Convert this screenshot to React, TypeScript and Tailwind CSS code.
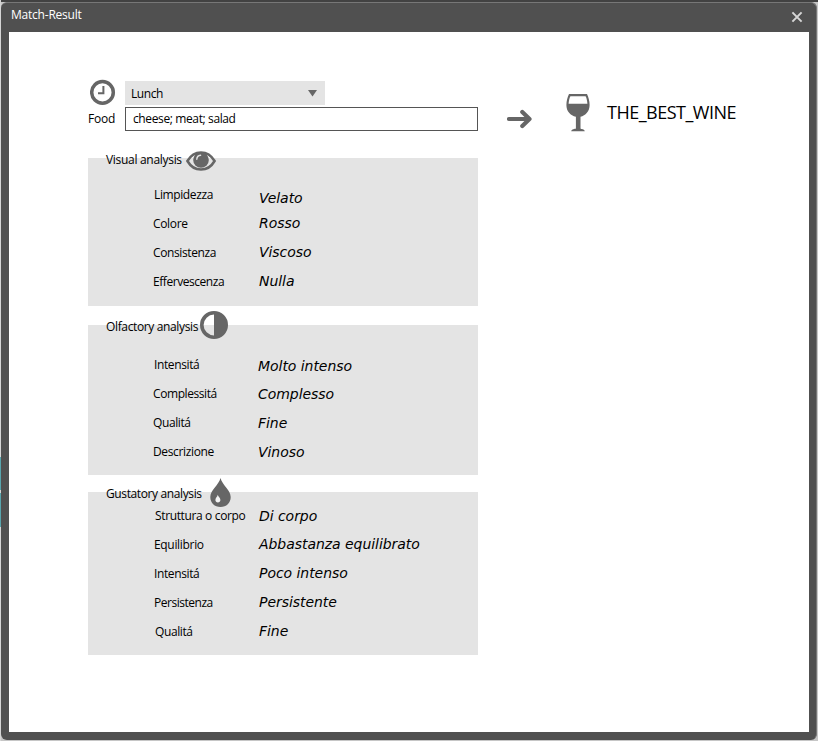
import React from "react";

type Item = { text: string; className: string };
type Analysis = {
  title: string;
  titleClass: string;
  icon: React.ReactNode;
  sectionClass: string;
  labels: Item[];
  values: Item[];
};

const label = "block h-4 w-fit whitespace-pre text-[12px] leading-[16px]";
const value =
  "block h-4 w-fit whitespace-pre font-['DejaVu_Sans',sans-serif] text-[14px] italic leading-[16px] tracking-[-0.05px]";

const EyeIcon = () => (
  <svg width="30" height="20" viewBox="0 0 30 20" className="ml-1 -mt-[7px]">
    <path d="M1.4 10C8-1.4 22-1.4 28.6 10C22 21.4 8 21.4 1.4 10Z" fill="none" stroke="#666" strokeWidth="2.5" />
    <circle cx="15" cy="9" r="7.8" fill="#666" />
    <path d="M10.8 8.2C10.9 5.9 12.4 4.4 14.6 4.2" fill="none" stroke="#e4e4e4" strokeWidth="1.4" strokeLinecap="round" />
  </svg>
);

const HalfCircleIcon = () => (
  <svg width="28" height="28" viewBox="0 0 28 28" className="-mt-[14px] ml-px">
    <circle cx="14" cy="14" r="12.2" fill="none" stroke="#666" strokeWidth="3.6" />
    <path d="M14 2A12 12 0 0 1 14 26Z" fill="#666" />
  </svg>
);

const DropIcon = () => (
  <svg width="21" height="30" viewBox="0 0 21 30" className="-mt-[14px] ml-[8px]">
    <path d="M10.5 0C12 6.8 20.7 12 20.7 19C20.7 25 16.4 29 10.5 29S.3 25 .3 19C.3 12 9 6.8 10.5 0Z" fill="#666" />
    <path d="M7.8 16.8C8.2 18.8 10.4 20 10.4 22.1C10.4 23.6 9.3 24.4 7.9 24.4S5.4 23.6 5.4 22.1C5.4 20 7.4 18.8 7.8 16.8Z" fill="#f3f3f3" />
  </svg>
);

const analyses: Analysis[] = [
  {
    title: "Visual analysis",
    titleClass: "w-[76px] tracking-[-0.3px]",
    icon: <EyeIcon />,
    sectionClass: "mt-[27px] h-[148px]",
    labels: [
      { text: "Limpidezza", className: "mt-[29px] ml-px tracking-[-0.38px]" },
      { text: "Colore", className: "mt-[13px] tracking-[-0.33px]" },
      { text: "Consistenza", className: "mt-[13px] tracking-[-0.38px]" },
      { text: "Effervescenza", className: "mt-[13px] tracking-[-0.45px]" },
    ],
    values: [
      { text: "Velato", className: "mt-[32px]" },
      { text: "Rosso", className: "mt-[9px]" },
      { text: "Viscoso", className: "mt-[13px]" },
      { text: "Nulla", className: "mt-[13px]" },
    ],
  },
  {
    title: "Olfactory analysis",
    titleClass: "w-[93px] tracking-[-0.36px]",
    icon: <HalfCircleIcon />,
    sectionClass: "mt-[19px] h-[150px]",
    labels: [
      { text: "Intensitá", className: "mt-[32px] ml-px tracking-[-0.38px]" },
      { text: "Complessitá", className: "mt-[13px] tracking-[-0.42px]" },
      { text: "Qualitá", className: "mt-[13px] tracking-[-0.4px]" },
      { text: "Descrizione", className: "mt-[13px] tracking-[-0.35px]" },
    ],
    values: [
      { text: "Molto intenso", className: "mt-[33px] -ml-px" },
      { text: "Complesso", className: "mt-[12px] -ml-px" },
      { text: "Fine", className: "mt-[13px] -ml-px" },
      { text: "Vinoso", className: "mt-[13px] -ml-px" },
    ],
  },
  {
    title: "Gustatory analysis",
    titleClass: "w-[96px] tracking-[-0.38px]",
    icon: <DropIcon />,
    sectionClass: "mt-[17px] h-[163px]",
    labels: [
      { text: "Struttura o corpo", className: "mt-[16px] ml-[2px] tracking-[-0.36px]" },
      { text: "Equilibrio", className: "mt-[13px] ml-px tracking-[-0.32px]" },
      { text: "Intensitá", className: "mt-[13px] ml-px tracking-[-0.38px]" },
      { text: "Persistenza", className: "mt-[13px] ml-px tracking-[-0.48px]" },
      { text: "Qualitá", className: "mt-[13px] ml-[2px] tracking-[-0.4px]" },
    ],
    values: [
      { text: "Di corpo", className: "mt-[16px]" },
      { text: "Abbastanza equilibrato", className: "mt-[12px]" },
      { text: "Poco intenso", className: "mt-[13px]" },
      { text: "Persistente", className: "mt-[13px]" },
      { text: "Fine", className: "mt-[13px]" },
    ],
  },
];

function AnalysisPanel({ data }: { data: Analysis }) {
  return (
    <section className={`w-[390px] bg-[#e4e4e4] ${data.sectionClass}`}>
      <header className="-mb-[10px] flex h-[10px] items-start pl-[18px]">
        <h2 className={`-mt-[6px] shrink-0 whitespace-nowrap text-[12px] leading-[16px] ${data.titleClass}`}>
          {data.title}
        </h2>
        <span className="shrink-0">{data.icon}</span>
      </header>
      <div className="flex pl-[65px]">
        <div className="flex w-[106px] flex-col">
          {data.labels.map((item) => (
            <span key={item.text} className={`${label} ${item.className}`}>{item.text}</span>
          ))}
        </div>
        <div className="flex flex-col">
          {data.values.map((item) => (
            <span key={item.text} className={`${value} ${item.className}`}>{item.text}</span>
          ))}
        </div>
      </div>
    </section>
  );
}

export default function App() {
  return (
    <div className="flex h-[741px] w-[818px] overflow-hidden bg-[#c6c6c6] font-['Open_Sans','Noto_Sans',sans-serif] text-black">
      <div className="flex w-px shrink-0 flex-col bg-[#d5d5d5] pt-[457px]">
        <i className="h-[33px] bg-[#58a5ad]" />
        <i className="mt-[3px] h-[34px] bg-[#58a5ad]" />
      </div>
      <div className="flex h-[740px] w-[817px] flex-col border-t-2 border-[#424242] bg-[#c6c6c6]">
        <div className="flex h-[738px] w-[816px] flex-col rounded-[6px] border-t border-r border-[#777] bg-[#505050] pl-[8px]">
          <div className="flex h-[29px] shrink-0 items-start justify-between pl-[2px] pr-[13px]">
            <h1 className="mt-[4px] text-[12px] leading-[16px] tracking-[-0.22px] text-white">Match-Result</h1>
            <svg width="12" height="12" viewBox="0 0 12 12" className="mt-[8px]">
              <path d="M1.4 1.4L10.6 10.6M10.6 1.4L1.4 10.6" stroke="#d6d6d6" strokeWidth="2" />
            </svg>
          </div>
          <main className="flex h-[700px] w-[800px] bg-white pl-[79px]">
            <div className="w-[390px] shrink-0 pt-[48px]">
              <div className="flex h-[26px]">
                <svg width="26" height="26" viewBox="0 0 26 26" className="ml-[2px] -mt-px shrink-0">
                  <circle cx="12.5" cy="13.4" r="10.8" fill="#fff" stroke="#666" strokeWidth="3.5" />
                  <path d="M13.4 7V14.2H8" fill="none" stroke="#666" strokeWidth="2" />
                </svg>
                <button className="ml-[9px] mt-px flex h-6 w-[200px] items-center justify-between bg-[#e4e4e4] pl-[6px] pr-[8px] text-[12px]">
                  <span className="pt-px tracking-[-0.45px]">Lunch</span>
                  <svg width="9" height="7" viewBox="0 0 9 7"><path d="M0 0H9L4.5 6.5Z" fill="#666" /></svg>
                </button>
              </div>
              <div className="mt-px flex h-6 items-center">
                <span className="w-[37px] text-[12px] tracking-[-0.2px]">Food</span>
                <div className="flex h-6 w-[353px] items-center border border-[#555] pl-[7px] text-[12px] tracking-[-0.38px]">cheese; meat; salad</div>
              </div>
              {analyses.map((data) => <AnalysisPanel key={data.title} data={data} />)}
            </div>
            <svg width="26" height="20" viewBox="0 0 26 20" className="ml-[29px] mt-[77px] shrink-0">
              <path d="M2 10H22M15.3 3L22.5 10L15.3 17" fill="none" stroke="#666" strokeWidth="4.2" strokeLinecap="round" strokeLinejoin="round" />
            </svg>
            <svg width="24" height="38" viewBox="0 0 24 38" className="ml-[33px] mt-[62px] shrink-0">
              <path d="M3 0H21C22.5 3 23.6 7 23.6 11C23.6 17.5 19.5 21.5 14.5 22.8V34.5C15 35.3 18.5 35 18.8 37.2H5.2C5.5 35 9 35.3 9.9 34.5V22.8C4.5 21.5 .4 17.5 .4 11C.4 7 1.5 3 3 0Z" fill="#666" />
              <path d="M4.4 2.2H19.6C20.7 4 21.2 7 21.4 9.7H2.6C2.8 7 3.3 4 4.4 2.2Z" fill="#fff" />
            </svg>
            <span className="ml-[17px] mt-[68px] h-6 whitespace-nowrap text-[18px] leading-[24px] tracking-[-0.5px]">THE_BEST_WINE</span>
          </main>
        </div>
      </div>
    </div>
  );
}
